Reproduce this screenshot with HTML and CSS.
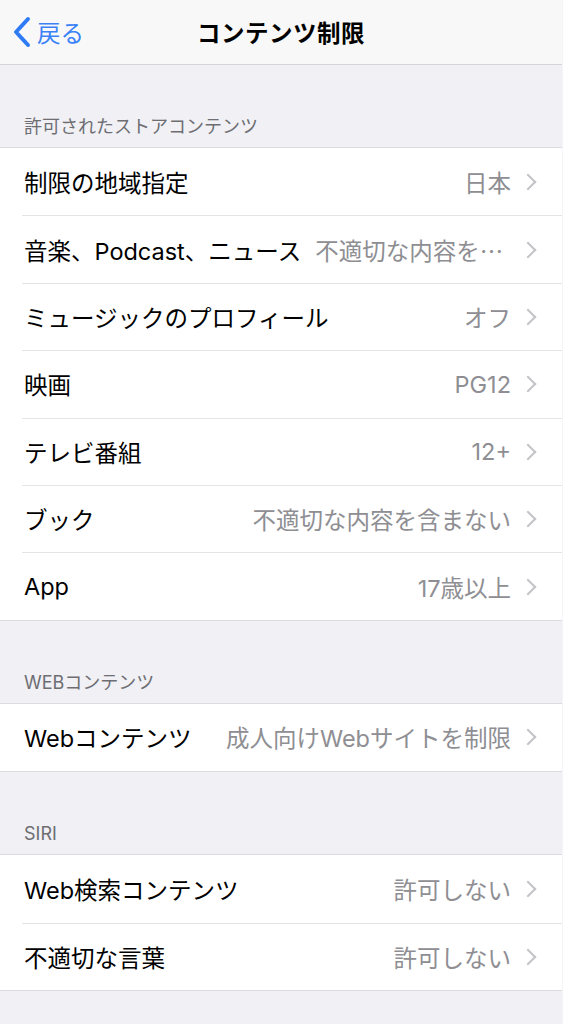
FILE: index.html
```html
<!DOCTYPE html>
<html lang="ja">
<head>
<meta charset="UTF-8" />
<meta name="viewport" content="width=device-width, initial-scale=1" />
<title>コンテンツ制限</title>
<link rel="stylesheet" href="styles.css">
</head>
<body>
<div class="screen">

  <div class="navbar">
    <a class="back" href="#">
      <svg class="back-icon" width="20" height="32" viewBox="0 0 20 32">
        <path d="M16 3 L4 16 L16 29" fill="none" stroke="#2f7bf5" stroke-width="4" stroke-linecap="round" stroke-linejoin="round"/>
      </svg>
      <span>戻る</span>
    </a>
    <h1 class="title">コンテンツ制限</h1>
  </div>

  <div class="section-header">許可されたストアコンテンツ</div>
  <div class="group">
    <div class="row"><span class="label">制限の地域指定</span><span class="value">日本</span><span class="chevron"></span></div>
    <div class="row"><span class="label">音楽、Podcast、ニュース</span><span class="value cjk">不適切な内容を含まない</span><span class="chevron"></span></div>
    <div class="row"><span class="label">ミュージックのプロフィール</span><span class="value">オフ</span><span class="chevron"></span></div>
    <div class="row"><span class="label">映画</span><span class="value">PG12</span><span class="chevron"></span></div>
    <div class="row"><span class="label">テレビ番組</span><span class="value">12+</span><span class="chevron"></span></div>
    <div class="row"><span class="label">ブック</span><span class="value">不適切な内容を含まない</span><span class="chevron"></span></div>
    <div class="row"><span class="label">App</span><span class="value">17歳以上</span><span class="chevron"></span></div>
  </div>

  <div class="section-header">WEBコンテンツ</div>
  <div class="group">
    <div class="row"><span class="label">Webコンテンツ</span><span class="value">成人向けWebサイトを制限</span><span class="chevron"></span></div>
  </div>

  <div class="section-header">SIRI</div>
  <div class="group">
    <div class="row"><span class="label">Web検索コンテンツ</span><span class="value">許可しない</span><span class="chevron"></span></div>
    <div class="row"><span class="label">不適切な言葉</span><span class="value">許可しない</span><span class="chevron"></span></div>
  </div>

</div>
</body>
</html>
```

FILE: styles.css
```css
html {
  background-color: white;
}

body {
  margin: 0;
  font-family: Inter, "Noto Sans CJK JP", sans-serif;
  color: black;
}

.screen {
  width: 562px;
  min-height: 1024px;
  background-color: #f0f0f5;
  border-right: 1px solid #f4f4f6;
}

/* ナビゲーションバー */
.navbar {
  height: 65px;
  background-color: #f8f8f9;
  border-bottom: 1px solid #d6d6da;
  display: flex;
  align-items: center;
  justify-content: center;
  position: relative;
  box-sizing: border-box;
}

.back {
  position: absolute;
  left: 12px;
  top: 15px;
  display: flex;
  align-items: center;
  gap: 5px;
  color: #3a82f6;
  text-decoration: none;
  font-size: 23.5px;
}

.back-icon {
  display: block;
}

.title {
  margin: 0;
  font-size: 23.5px;
  font-weight: bold;
  letter-spacing: 0.5px;
}

.section-header {
  padding: 49px 24px 8px;
  font-size: 18px;
  line-height: 25px;
  color: #6d6d72;
}

.group {
  background-color: white;
  border-top: 1px solid #dcdce0;
  border-bottom: 1px solid #dcdce0;
}

.row {
  height: 67.4px;
  display: flex;
  align-items: center;
  padding: 0 24px 0 24px;
  font-size: 23.5px;
  box-sizing: border-box;
}

.row + .row {
  border-top: 1px solid #e4e4e6;
  margin-left: 22px;
  padding-left: 2px;
}

.label {
  flex-shrink: 0;
  white-space: nowrap;
}

.value {
  flex: 1;
  min-width: 0;
  margin-left: 14px;
  text-align: right;
  color: #8e8e93;
  white-space: nowrap;
  overflow: hidden;
  text-overflow: ellipsis;
}

.value.cjk {
  font-family: "Noto Sans CJK JP", sans-serif;
}

.chevron {
  flex-shrink: 0;
  width: 10px;
  height: 10px;
  margin-left: 11px;
  margin-right: 4px;
  border-top: 2.2px solid #c4c4c8;
  border-right: 2.2px solid #c4c4c8;
  transform: rotate(45deg);
}
```
